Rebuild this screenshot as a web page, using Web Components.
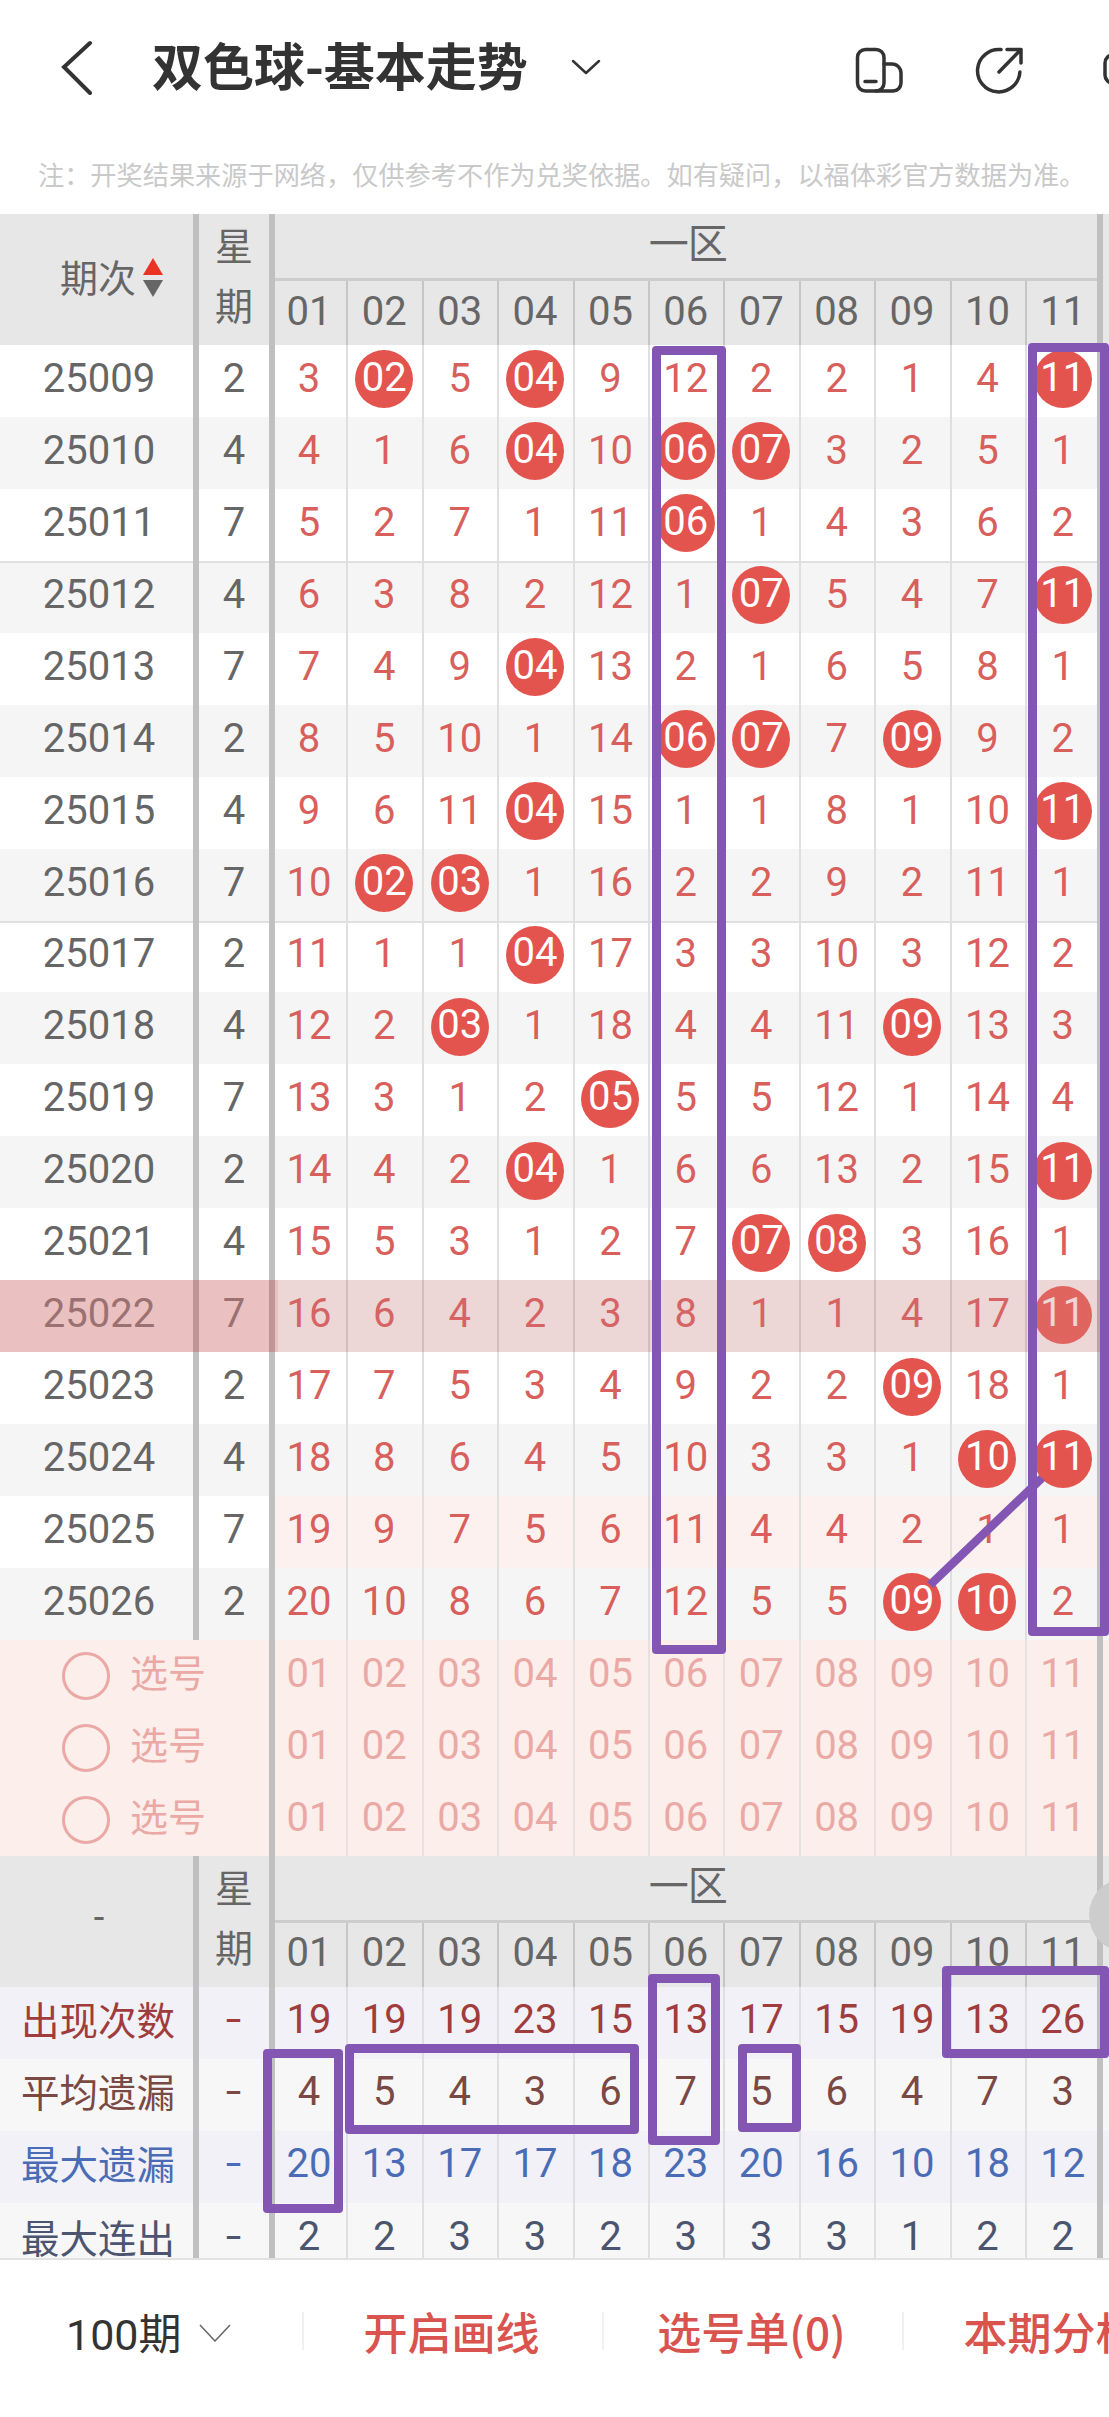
<!DOCTYPE html>
<html lang="zh"><head><meta charset="utf-8"><title>双色球-基本走势</title>
<style>
html,body{margin:0;padding:0;background:#fff}
body{width:1109px;height:2417px;overflow:hidden;position:relative;font-family:Roboto,"Noto Sans CJK SC",sans-serif;color:#666}
.stats{display:block;height:271px}
</style></head><body>
<x-nav>双色球-基本走势</x-nav>
<x-note>注：开奖结果来源于网络，仅供参考不作为兑奖依据。如有疑问，以福体彩官方数据为准。</x-note>
<x-head sort>期次</x-head>
<x-row p="25009" w="2" n="3 *02 5 *04 9 12 2 2 1 4 *11"></x-row>
<x-row p="25010" w="4" n="4 1 6 *04 10 *06 *07 3 2 5 1" alt></x-row>
<x-row p="25011" w="7" n="5 2 7 1 11 *06 1 4 3 6 2"></x-row>
<x-row p="25012" w="4" n="6 3 8 2 12 1 *07 5 4 7 *11" alt line></x-row>
<x-row p="25013" w="7" n="7 4 9 *04 13 2 1 6 5 8 1"></x-row>
<x-row p="25014" w="2" n="8 5 10 1 14 *06 *07 7 *09 9 2" alt></x-row>
<x-row p="25015" w="4" n="9 6 11 *04 15 1 1 8 1 10 *11"></x-row>
<x-row p="25016" w="7" n="10 *02 *03 1 16 2 2 9 2 11 1" alt></x-row>
<x-row p="25017" w="2" n="11 1 1 *04 17 3 3 10 3 12 2" line></x-row>
<x-row p="25018" w="4" n="12 2 *03 1 18 4 4 11 *09 13 3" alt></x-row>
<x-row p="25019" w="7" n="13 3 1 2 *05 5 5 12 1 14 4"></x-row>
<x-row p="25020" w="2" n="14 4 2 *04 1 6 6 13 2 15 *11" alt></x-row>
<x-row p="25021" w="4" n="15 5 3 1 2 7 *07 *08 3 16 1"></x-row>
<x-row p="25022" w="7" n="16 6 4 2 3 8 1 1 4 17 *11" hl></x-row>
<x-row p="25023" w="2" n="17 7 5 3 4 9 2 2 *09 18 1"></x-row>
<x-row p="25024" w="4" n="18 8 6 4 5 10 3 3 1 *10 *11" alt></x-row>
<x-row p="25025" w="7" n="19 9 7 5 6 11 4 4 2 1 1" pink></x-row>
<x-row p="25026" w="2" n="20 10 8 6 7 12 5 5 *09 *10 2" alt></x-row>
<x-pick></x-pick><x-pick></x-pick><x-pick></x-pick>
<x-head>-</x-head>
<div class="stats">
<x-stat l="出现次数" c="#a03c3c" bg="#f1f1f7" n="19 19 19 23 15 13 17 15 19 13 26"></x-stat>
<x-stat l="平均遗漏" c="#7b4944" bg="#f7f7f7" n="4 5 4 3 6 7 5 6 4 7 3"></x-stat>
<x-stat l="最大遗漏" c="#4a6cb6" bg="#f1f1f7" n="20 13 17 17 18 23 20 16 10 18 12"></x-stat>
<x-stat l="最大连出" c="#4c5570" bg="#f7f7f7" n="2 2 3 3 2 3 3 3 1 2 2" last></x-stat>
</div>
<x-foot></x-foot>
<x-fab></x-fab>
<x-mark x="652" y="346" w="74" h="1308"></x-mark>
<x-mark x="1028" y="343" w="81" h="1293"></x-mark>
<x-stroke></x-stroke>
<x-mark x="263" y="2049" w="80" h="164"></x-mark>
<x-mark x="345" y="2044" w="294" h="90"></x-mark>
<x-mark x="648" y="1974" w="72" h="171"></x-mark>
<x-mark x="738" y="2044" w="63" h="88"></x-mark>
<x-mark x="942" y="1966" w="167" h="92"></x-mark>
<script>
const FONT='font-family:Roboto,"Noto Sans CJK SC",sans-serif;';
const base=`
.s{flex:none;width:6px;background:#c0c0c0;align-self:stretch;position:relative;z-index:1}
.s2{margin-right:-4px}.s3{margin-left:-3px}
.a{flex:none;width:193px;display:flex;align-items:center;justify-content:center;padding-bottom:5px;padding-left:5px;box-sizing:border-box}
.b{flex:none;width:70px;display:flex;align-items:center;justify-content:center;padding-bottom:5px;box-sizing:border-box}
.c{flex:none;width:75.4px;box-sizing:border-box;border-left:2.5px solid var(--line,#dfdfdf);padding-right:1.6px;display:flex;align-items:center;justify-content:center;padding-bottom:5px}
.rest{flex:1}
`;
function def(name,fn){customElements.define(name,class extends HTMLElement{connectedCallback(){if(this.shadowRoot)return;const r=this.attachShadow({mode:'open'});r.innerHTML=fn(this)}})}
def('x-nav',()=>`<style>
:host{display:flex;height:134px;align-items:center;padding-left:60px;box-sizing:border-box;overflow:hidden;color:#333}
svg{flex:none;display:block;fill:none;stroke:#333;stroke-width:3.5;stroke-linecap:round;stroke-linejoin:round}
.t{flex:none;width:419px;margin-left:58px;font:700 51px/1 "Noto Sans CJK SC",sans-serif;white-space:nowrap;padding-bottom:6px}
</style>
<svg width="34" height="56" viewBox="0 0 34 56" style="stroke-width:4;stroke-linejoin:miter"><path d="M30 4 4 28l26 26"/></svg>
<div class="t"><slot></slot></div>
<svg width="30" height="16" viewBox="0 0 30 16" style="stroke-width:2.5"><path d="M2 2l13 12L28 2"/></svg>
<svg width="56" height="56" viewBox="0 0 56 56" style="margin-left:251px"><rect x="5.5" y="10.5" width="26.5" height="41.5" rx="8"/><path d="M32 25h8a9 9 0 0 1 9 9v10a8 8 0 0 1-8 8H24M13 42.500H24"/></svg>
<svg width="60" height="56" viewBox="0 0 60 56" style="margin-left:62px"><path d="M31 10.600A21.200 21.200 0 1 0 49.900 33M29 33 51 10.500M37 10.500H51V24"/></svg>
<svg width="40" height="56" viewBox="0 0 40 56" style="margin-left:73px"><rect x="2" y="16" width="60" height="28" rx="8"/></svg>`);
def('x-note',()=>`<style>:host{display:flex;height:80px;align-items:center;padding-left:38px;font:400 26.200px/1 "Noto Sans CJK SC",sans-serif;color:#c9c9c9;white-space:nowrap;overflow:hidden}</style><slot></slot>`);
const heads=Array.from({length:11},(_,i)=>`<div class="c">${String(i+1).padStart(2,'0')}</div>`).join('');
def('x-head',e=>`<style>${base}
:host{display:flex;height:131px;background:#e7e7e7;color:#666;--line:#c6c6c6;font-size:40px;${FONT}}
.a{font-size:38px;padding-bottom:9px;padding-left:${e.hasAttribute('sort')?'0':'5px'};${e.hasAttribute('sort')?'justify-content:flex-start;padding-left:60px;':''}}
.w{flex:none;width:70px;display:flex;flex-direction:column;align-items:center;font-size:38px;line-height:60px;padding-top:3px;box-sizing:border-box}
.r{flex:none;width:829.4px;display:flex;flex-direction:column}
.z{height:64px;font-size:40px;line-height:62px;text-align:center;box-sizing:border-box;margin-left:4px;letter-spacing:-1px}
.h{height:3px;background:#cdcdcd;margin-left:4px}
.n{flex:1;display:flex}
.n .c{padding-bottom:4px}
.tri{display:flex;flex-direction:column;margin-left:7px;gap:5px;margin-top:4px}
.tri i{display:block;width:0;height:0;border-left:10px solid transparent;border-right:10px solid transparent}
.up{border-bottom:17px solid #ea3323}.dn{border-top:17px solid #666}
</style>
<div class="a"><slot></slot>${e.hasAttribute('sort')?'<div class="tri"><i class="up"></i><i class="dn"></i></div>':''}</div>
<div class="s"></div><div class="w"><span>星</span><span>期</span></div><div class="s s2"></div>
<div class="r"><div class="z">一区</div><div class="h"></div><div class="n">${heads}</div></div>
<div class="s s3"></div><div class="rest"></div>`);
def('x-row',e=>{const hl=e.hasAttribute('hl');const cells=e.getAttribute('n').split(' ').map(v=>v[0]=='*'?`<div class="c k"><span class="ball">${v.slice(1)}</span></div>`:`<div class="c">${v}</div>`).join('');
return `<style>${base}
:host{display:flex;height:71.95px;position:relative;font-size:40px;${FONT}background:${e.hasAttribute('alt')?'#f5f5f5':'#fff'};color:${hl?'#8a8a8a':'#666'}}
:host([line]){box-shadow:inset 0 2px 0 #e0e0e0}
.c{color:${hl?'#e47070':'#d85f5b'}}
.c.k{padding-bottom:3px}
.ball{width:58px;height:58px;border-radius:50%;background:${hl?'#f0706a':'#e4544f'};color:#fff;display:flex;align-items:center;justify-content:center;padding-bottom:4px;box-sizing:border-box}
${e.hasAttribute('pink')?'.c,.rest{background:#fdf1f0}':''}
.hl{position:absolute;inset:0;z-index:2;background:linear-gradient(to right,rgba(190,60,60,.32) 278px,rgba(160,50,50,.2) 278px)}
</style>
<div class="a">${e.getAttribute('p')}</div><div class="s"></div><div class="b">${e.getAttribute('w')}</div><div class="s s2"></div>${cells}<div class="s s3"></div><div class="rest"></div>${hl?'<div class="hl"></div>':''}`});
def('x-pick',()=>`<style>${base}
:host{display:flex;height:72px;background:#fcefeb;font-size:40px;color:#eba9a6;--line:#e6e0de;${FONT}}
.l{flex:none;width:269px;display:flex;align-items:center;padding-left:62px;box-sizing:border-box;font-size:38px}
.o{width:48px;height:48px;border:3px solid #eba9a6;border-radius:50%;box-sizing:border-box;margin-right:20px}
.x{padding-bottom:10px}
</style><div class="l"><span class="o"></span><span class="x">选号</span></div><div class="s s2"></div>${heads}<div class="s s3"></div><div class="rest"></div>`);
def('x-stat',e=>`<style>${base}
:host{display:flex;height:${e.hasAttribute('last')?55:72}px;font-size:40px;line-height:1;${FONT}background:${e.getAttribute('bg')};color:${e.getAttribute('c')}}
.a{font:400 38.500px/1 "Noto Sans CJK SC",sans-serif;white-space:nowrap;padding-bottom:9px;padding-left:3px}
.dash{display:inline-block;transform:scaleX(1.4)}
${e.hasAttribute('last')?'.a,.b,.c{align-items:flex-start;padding-bottom:0;padding-top:14px}':''}
</style><div class="a">${e.getAttribute('l')}</div><div class="s"></div><div class="b"><span class="dash">-</span></div><div class="s s2"></div>${e.getAttribute('n').split(' ').map(v=>`<div class="c">${v}</div>`).join('')}<div class="s s3"></div><div class="rest"></div>`);
def('x-foot',()=>`<style>
:host{display:flex;height:159px;box-sizing:border-box;border-top:2px solid #e2e2e2;background:#fff;overflow:hidden;align-items:center;padding-bottom:14px;${FONT}}
.p{flex:none;width:302px;padding-left:66px;box-sizing:border-box;display:flex;align-items:center;font-size:43px;color:#333}
.p svg{margin-left:17px;display:block;margin-top:4px}
.i{flex:none;width:300px;border-left:2px solid #f0f0f0;height:38px;display:flex;align-items:center;justify-content:center;padding-right:3px;font:500 44px/38px "Noto Sans CJK SC",sans-serif;color:#d9534f;white-space:nowrap;box-sizing:border-box}
</style><div class="p">100期<svg width="32" height="18" viewBox="0 0 32 18" fill="none" stroke="#666" stroke-width="1.500"><path d="M1 1l15 16L31 1"/></svg></div>
<div class="i">开启画线</div><div class="i">选号单(0)</div><div class="i">本期分析</div>`);
def('x-fab',()=>`<style>:host{position:absolute;left:1089px;top:1878px;width:74px;height:74px;border-radius:50%;background:#cdcdcd;z-index:3}</style>`);
def('x-mark',e=>`<style>:host{position:absolute;left:${e.getAttribute('x')}px;top:${e.getAttribute('y')}px;width:${e.getAttribute('w')}px;height:${e.getAttribute('h')}px;box-sizing:border-box;border:9px solid #8356b4;border-radius:4px;z-index:5}</style>`);
def('x-stroke',()=>`<style>:host{position:absolute;left:920px;top:1470px;width:130px;height:125px;z-index:5}svg{display:block}</style><svg width="130" height="125" viewBox="0 0 130 125"><path d="M10 115 122 8" stroke="#8356b4" stroke-width="8.500" fill="none"/></svg>`);
</script>
</body></html>
